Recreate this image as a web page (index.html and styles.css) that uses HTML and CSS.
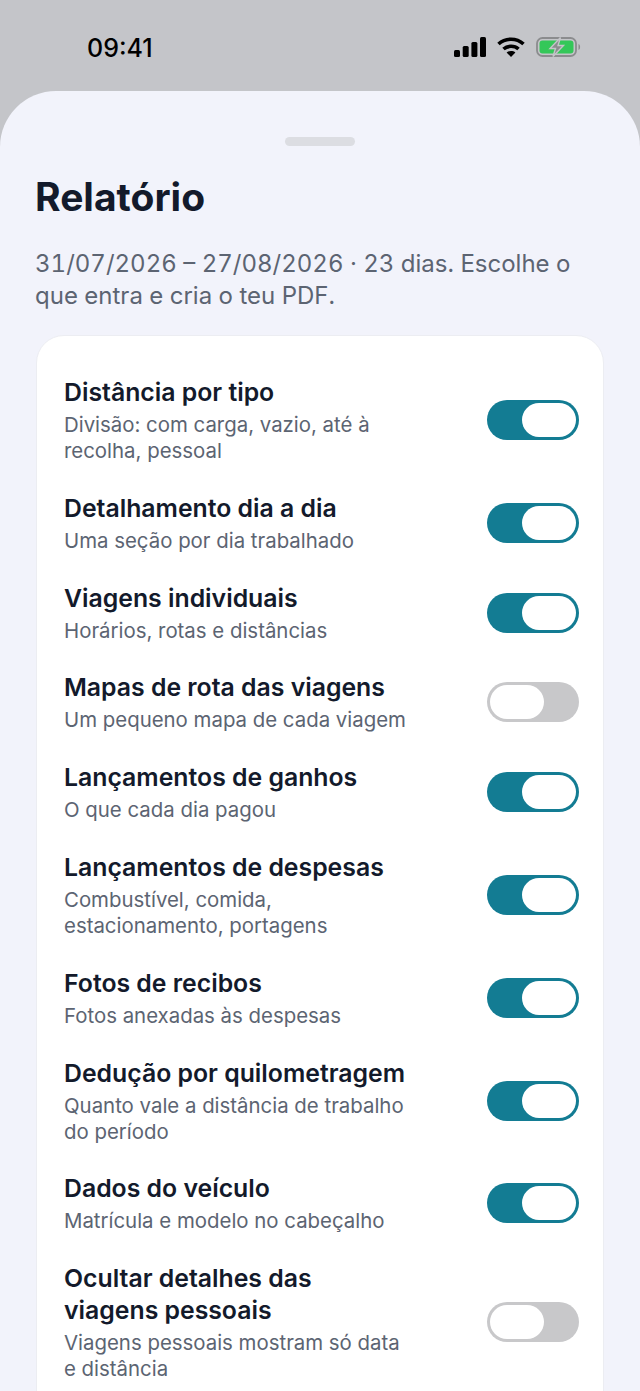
FILE: index.html
```html
<!DOCTYPE html>
<html lang="pt">
<head>
<meta charset="UTF-8">
<meta name="viewport" content="width=device-width, initial-scale=1.0">
<title>Relatório</title>
<link rel="stylesheet" href="styles.css">
</head>
<body>
<div class="status-bar">
    <span class="time">09:41</span>
    <div class="status-icons">
        <svg class="signal" width="32" height="20" viewBox="0 0 32 20">
            <rect x="0" y="13" width="6" height="7" rx="1.5"/>
            <rect x="8.7" y="9" width="6" height="11" rx="1.5"/>
            <rect x="17.4" y="5" width="6" height="15" rx="1.5"/>
            <rect x="26" y="0" width="6" height="20" rx="1.5"/>
        </svg>
        <svg class="wifi" width="28" height="20" viewBox="0 0 28 20">
            <path d="M1.5 7 C8.5 0.6 19.5 0.6 26.5 7" fill="none" stroke="#000" stroke-width="3.6"/>
            <path d="M6.5 12 C10.5 8.4 17.5 8.4 21.5 12" fill="none" stroke="#000" stroke-width="3.6"/>
            <path d="M9.6 15.4 C12 13.6 16 13.6 18.4 15.4 L14 20 Z" fill="#000"/>
        </svg>
        <svg class="battery" width="45" height="20" viewBox="0 0 45 20">
            <rect x="1" y="1" width="39" height="18" rx="5.5" fill="none" stroke="#8b8c8e" stroke-width="1.8"/>
            <rect x="3.5" y="3.5" width="34" height="13" rx="3" fill="#34c759"/>
            <path d="M42.5 7 C44.6 7.6 44.6 12.4 42.5 13 Z" fill="#8b8c8e"/>
            <path d="M24.5 0.5 L14 11.5 H19.5 L17 19.5 L27.5 8.5 H22 Z" fill="#8b8c8e" stroke="#c4c5c9" stroke-width="1.4"/>
        </svg>
    </div>
</div>

<div class="sheet">
    <div class="handle"></div>
    <h1>Relatório</h1>
    <p class="intro">31/07/2026 – 27/08/2026 · 23 dias. Escolhe o que entra e cria o teu PDF.</p>

    <div class="card">
        <div class="row">
            <div class="row-text">
                <div class="row-title">Distância por tipo</div>
                <div class="row-desc">Divisão: com carga, vazio, até à recolha, pessoal</div>
            </div>
            <div class="toggle on"><span class="thumb"></span></div>
        </div>
        <div class="row">
            <div class="row-text">
                <div class="row-title">Detalhamento dia a dia</div>
                <div class="row-desc">Uma seção por dia trabalhado</div>
            </div>
            <div class="toggle on"><span class="thumb"></span></div>
        </div>
        <div class="row">
            <div class="row-text">
                <div class="row-title">Viagens individuais</div>
                <div class="row-desc">Horários, rotas e distâncias</div>
            </div>
            <div class="toggle on"><span class="thumb"></span></div>
        </div>
        <div class="row">
            <div class="row-text">
                <div class="row-title">Mapas de rota das viagens</div>
                <div class="row-desc">Um pequeno mapa de cada viagem</div>
            </div>
            <div class="toggle"><span class="thumb"></span></div>
        </div>
        <div class="row">
            <div class="row-text">
                <div class="row-title">Lançamentos de ganhos</div>
                <div class="row-desc">O que cada dia pagou</div>
            </div>
            <div class="toggle on"><span class="thumb"></span></div>
        </div>
        <div class="row">
            <div class="row-text">
                <div class="row-title">Lançamentos de despesas</div>
                <div class="row-desc">Combustível, comida, estacionamento, portagens</div>
            </div>
            <div class="toggle on"><span class="thumb"></span></div>
        </div>
        <div class="row">
            <div class="row-text">
                <div class="row-title">Fotos de recibos</div>
                <div class="row-desc">Fotos anexadas às despesas</div>
            </div>
            <div class="toggle on"><span class="thumb"></span></div>
        </div>
        <div class="row">
            <div class="row-text">
                <div class="row-title">Dedução por quilometragem</div>
                <div class="row-desc">Quanto vale a distância de trabalho do período</div>
            </div>
            <div class="toggle on"><span class="thumb"></span></div>
        </div>
        <div class="row">
            <div class="row-text">
                <div class="row-title">Dados do veículo</div>
                <div class="row-desc">Matrícula e modelo no cabeçalho</div>
            </div>
            <div class="toggle on"><span class="thumb"></span></div>
        </div>
        <div class="row">
            <div class="row-text">
                <div class="row-title">Ocultar detalhes das viagens pessoais</div>
                <div class="row-desc">Viagens pessoais mostram só data e distância</div>
            </div>
            <div class="toggle"><span class="thumb"></span></div>
        </div>
    </div>
</div>
</body>
</html>
```

FILE: styles.css
```css
html, body {
  height: 1391px;
  overflow: hidden;
}

body {
  margin: 0;
  background-color: #c4c5c9;
  font-family: Inter, 'Liberation Sans', sans-serif;
}

.status-bar {
  height: 91px;
  padding: 0 59px 0 87px;
  display: flex;
  align-items: flex-start;
  justify-content: space-between;
}

.time {
  margin-top: 33px;
  font-size: 25px;
  line-height: 30px;
  font-weight: 500;
  color: #000;
}

.status-icons {
  margin-top: 37px;
  display: flex;
  align-items: center;
  gap: 11px;
}

.sheet {
  height: 1300px;
  padding: 46px 36px 0 35px;
  background-color: #f2f3fb;
  border-radius: 56px 56px 0 0;
}

.handle {
  width: 70px;
  height: 9px;
  margin: 0 auto;
  border-radius: 5px;
  background-color: #dcdde2;
}

h1 {
  margin: 28px 0 0;
  font-size: 39px;
  line-height: 46px;
  font-weight: 700;
  color: #131a2b;
}

.intro {
  margin: 28px 0 0;
  font-size: 24px;
  line-height: 32px;
  font-variant-numeric: tabular-nums;
  color: #5c6472;
}

.card {
  margin: 23px 0 0 1px;
  padding: 40px 24px 40px 27px;
  display: flex;
  flex-direction: column;
  gap: 27.8px;
  background-color: #fff;
  border: 1px solid #ecedf2;
  border-radius: 28px;
}

.row {
  display: flex;
  align-items: center;
  justify-content: space-between;
}

.row-text {
  width: 345px;
}

.row-title {
  font-size: 24.8px;
  line-height: 32px;
  font-weight: 600;
  color: #131a2b;
}

.row-desc {
  margin-top: 4px;
  font-size: 20.4px;
  line-height: 26px;
  color: #5c6472;
}

.toggle {
  width: 92px;
  height: 40px;
  padding: 3px;
  box-sizing: border-box;
  display: flex;
  border-radius: 20px;
  background-color: #c8c8ca;
}

.toggle.on {
  justify-content: flex-end;
  background-color: #137c93;
}

.thumb {
  width: 54px;
  height: 34px;
  border-radius: 17px;
  background-color: #fff;
}
```
